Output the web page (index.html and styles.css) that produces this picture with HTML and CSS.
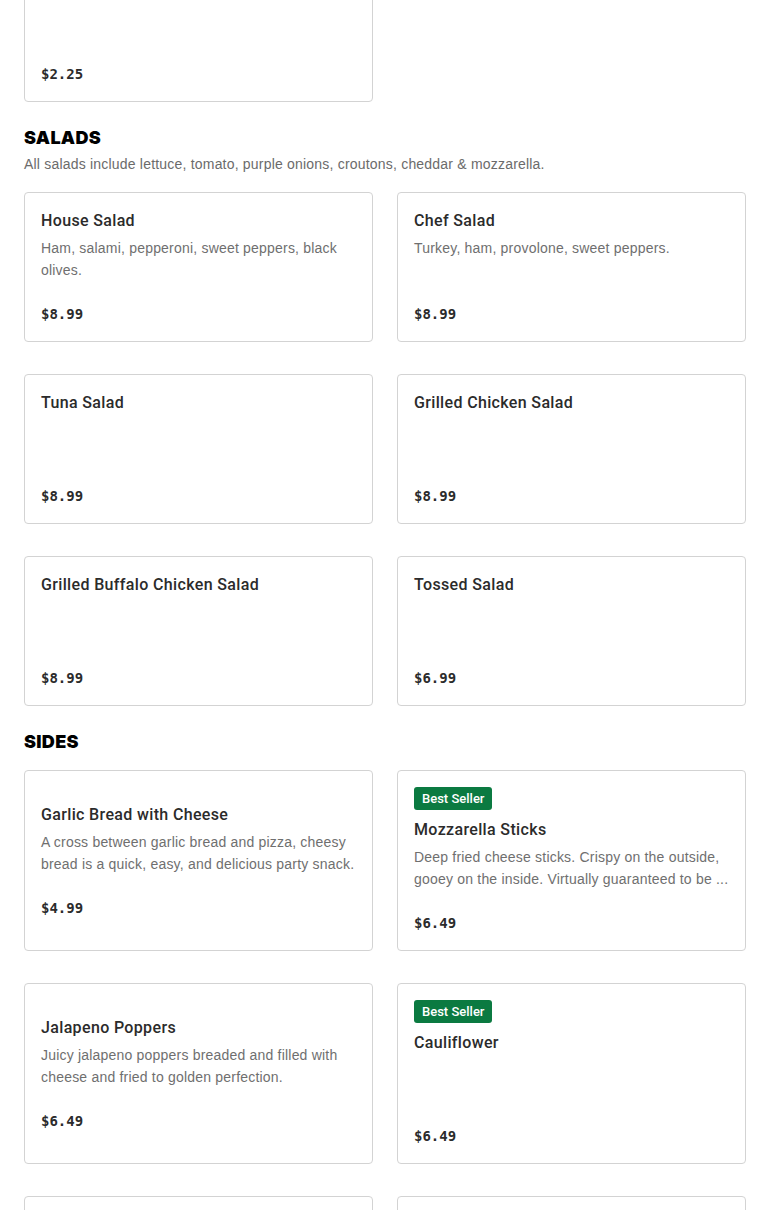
FILE: index.html
```html
<!DOCTYPE html>
<html lang="en">
<head>
<meta charset="utf-8">
<title>Menu</title>
<link rel="stylesheet" href="styles.css">
</head>
<body>
<main class="menu">
  <section class="section section-first">
    <div class="grid">
      <article class="card">
        <div class="card-body">
          <h3 class="item-name"></h3>
          <p class="price">$2.25</p>
        </div>
      </article>
    </div>
  </section>

  <section class="section">
    <h2 class="section-title">SALADS</h2>
    <p class="section-desc">All salads include lettuce, tomato, purple onions, croutons, cheddar &amp; mozzarella.</p>
    <div class="grid">
      <article class="card">
        <div class="card-body">
          <h3 class="item-name">House Salad</h3>
          <p class="item-desc">Ham, salami, pepperoni, sweet peppers, black olives.</p>
          <p class="price">$8.99</p>
        </div>
      </article>
      <article class="card">
        <div class="card-body">
          <h3 class="item-name">Chef Salad</h3>
          <p class="item-desc">Turkey, ham, provolone, sweet peppers.</p>
          <p class="price">$8.99</p>
        </div>
      </article>
      <article class="card">
        <div class="card-body">
          <h3 class="item-name">Tuna Salad</h3>
          <p class="price">$8.99</p>
        </div>
      </article>
      <article class="card">
        <div class="card-body">
          <h3 class="item-name">Grilled Chicken Salad</h3>
          <p class="price">$8.99</p>
        </div>
      </article>
      <article class="card">
        <div class="card-body">
          <h3 class="item-name">Grilled Buffalo Chicken Salad</h3>
          <p class="price">$8.99</p>
        </div>
      </article>
      <article class="card">
        <div class="card-body">
          <h3 class="item-name">Tossed Salad</h3>
          <p class="price">$6.99</p>
        </div>
      </article>
    </div>
  </section>

  <section class="section">
    <h2 class="section-title">SIDES</h2>
    <div class="grid">
      <article class="card">
        <div class="card-body">
          <h3 class="item-name">Garlic Bread with Cheese</h3>
          <p class="item-desc">A cross between garlic bread and pizza, cheesy bread is a quick, easy, and delicious party snack.</p>
          <p class="price">$4.99</p>
        </div>
      </article>
      <article class="card">
        <span class="badge">Best Seller</span>
        <div class="card-body">
          <h3 class="item-name">Mozzarella Sticks</h3>
          <p class="item-desc">Deep fried cheese sticks. Crispy on the outside, gooey on the inside. Virtually guaranteed to be ...</p>
          <p class="price">$6.49</p>
        </div>
      </article>
      <article class="card">
        <div class="card-body">
          <h3 class="item-name">Jalapeno Poppers</h3>
          <p class="item-desc">Juicy jalapeno poppers breaded and filled with cheese and fried to golden perfection.</p>
          <p class="price">$6.49</p>
        </div>
      </article>
      <article class="card">
        <span class="badge">Best Seller</span>
        <div class="card-body">
          <h3 class="item-name">Cauliflower</h3>
          <p class="price">$6.49</p>
        </div>
      </article>
      <article class="card">
        <div class="card-body">
          <h3 class="item-name">&nbsp;</h3>
          <p class="price">&nbsp;</p>
        </div>
      </article>
      <article class="card">
        <div class="card-body">
          <h3 class="item-name">&nbsp;</h3>
          <p class="price">&nbsp;</p>
        </div>
      </article>
    </div>
  </section>
</main>
</body>
</html>
```

FILE: styles.css
```css
* {
  box-sizing: border-box;
}

html, body {
  margin: 0;
  padding: 0;
  background: #ffffff;
}

body {
  font-family: "Liberation Sans", Arial, sans-serif;
  color: #2b2b2b;
  overflow: hidden;
}

.menu {
  padding: 0 24px;
  margin-top: -48px;
}

.section {
  padding-top: 23px;
}

.section-first {
  padding-top: 0;
}

.section-title {
  margin: 0;
  font-family: "Inter", "Liberation Sans", sans-serif;
  font-size: 18px;
  font-weight: 900;
  line-height: 23px;
  padding-top: 1px;
  color: #000000;
  letter-spacing: 0.3px;
}

.section-desc {
  margin: 4px 0 0;
  font-size: 14px;
  line-height: 22px;
  color: #6b6b6b;
  letter-spacing: 0.2px;
}

.grid {
  display: grid;
  grid-template-columns: 1fr 1fr;
  column-gap: 24px;
  row-gap: 32px;
  margin-top: 17px;
}

.section-first .grid {
  margin-top: 0;
}

.card {
  border: 1px solid #d3d3d3;
  border-radius: 4px;
  padding: 16px;
  min-height: 150px;
  display: flex;
  flex-direction: column;
  justify-content: center;
  align-items: flex-start;
}

.badge {
  display: inline-block;
  background: #0b7a41;
  color: #ffffff;
  font-family: "Roboto", "Liberation Sans", sans-serif;
  font-size: 13px;
  font-weight: 500;
  line-height: 23px;
  padding: 0 8px;
  border-radius: 3px;
  margin-bottom: 8px;
}

.card-body {
  width: 100%;
  min-height: 116px;
  display: flex;
  flex-direction: column;
}

.item-name {
  margin: 0;
  padding-top: 1px;
  font-family: "Roboto", "Liberation Sans", sans-serif;
  font-size: 16px;
  font-weight: 500;
  line-height: 22px;
  color: #2b2b2b;
  letter-spacing: 0.35px;
}

.item-desc {
  margin: 5px 0 0;
  font-size: 14px;
  line-height: 22px;
  color: #6f6f6f;
  letter-spacing: 0.2px;
}

.price {
  margin: auto 0 0;
  padding-top: 21px;
  font-family: "DejaVu Sans Mono", "Liberation Mono", monospace;
  font-size: 14px;
  font-weight: 700;
  line-height: 22px;
  color: #2b2b2b;
}
```
